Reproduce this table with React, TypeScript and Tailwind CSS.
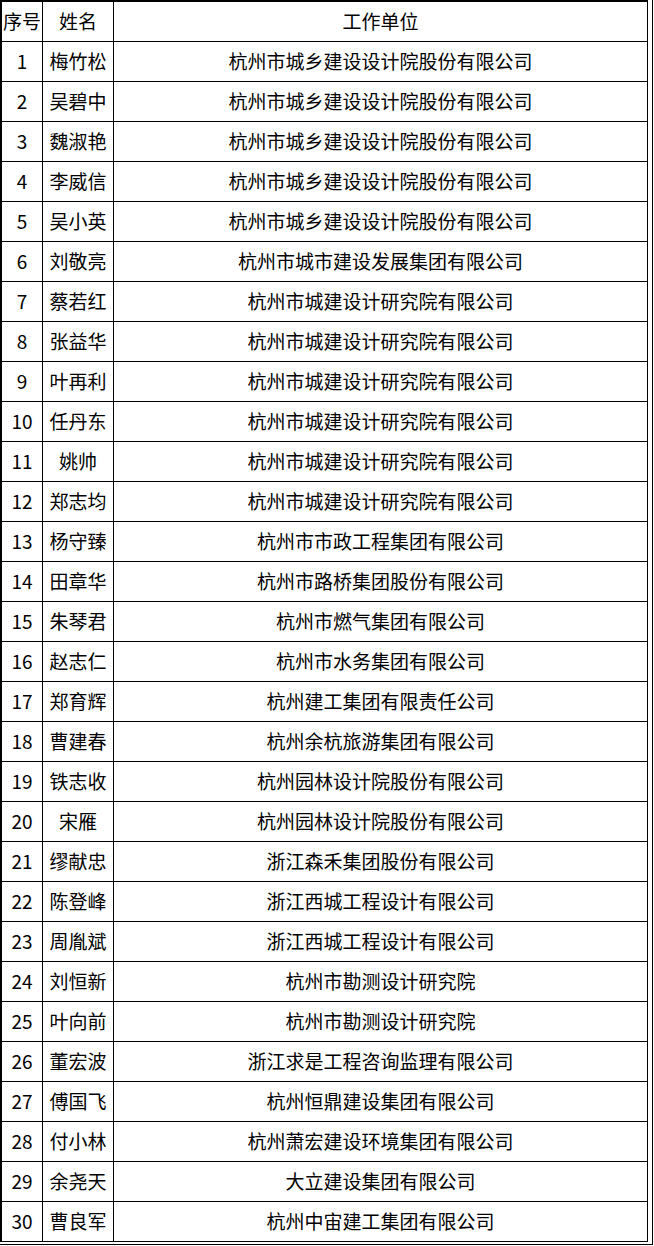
const ROWS: [string, string][] = [
  ['梅竹松', '杭州市城乡建设设计院股份有限公司'],
  ['吴碧中', '杭州市城乡建设设计院股份有限公司'],
  ['魏淑艳', '杭州市城乡建设设计院股份有限公司'],
  ['李威信', '杭州市城乡建设设计院股份有限公司'],
  ['吴小英', '杭州市城乡建设设计院股份有限公司'],
  ['刘敬亮', '杭州市城市建设发展集团有限公司'],
  ['蔡若红', '杭州市城建设计研究院有限公司'],
  ['张益华', '杭州市城建设计研究院有限公司'],
  ['叶再利', '杭州市城建设计研究院有限公司'],
  ['任丹东', '杭州市城建设计研究院有限公司'],
  ['姚帅', '杭州市城建设计研究院有限公司'],
  ['郑志均', '杭州市城建设计研究院有限公司'],
  ['杨守臻', '杭州市市政工程集团有限公司'],
  ['田章华', '杭州市路桥集团股份有限公司'],
  ['朱琴君', '杭州市燃气集团有限公司'],
  ['赵志仁', '杭州市水务集团有限公司'],
  ['郑育辉', '杭州建工集团有限责任公司'],
  ['曹建春', '杭州余杭旅游集团有限公司'],
  ['铁志收', '杭州园林设计院股份有限公司'],
  ['宋雁', '杭州园林设计院股份有限公司'],
  ['缪献忠', '浙江森禾集团股份有限公司'],
  ['陈登峰', '浙江西城工程设计有限公司'],
  ['周胤斌', '浙江西城工程设计有限公司'],
  ['刘恒新', '杭州市勘测设计研究院'],
  ['叶向前', '杭州市勘测设计研究院'],
  ['董宏波', '浙江求是工程咨询监理有限公司'],
  ['傅国飞', '杭州恒鼎建设集团有限公司'],
  ['付小林', '杭州萧宏建设环境集团有限公司'],
  ['余尧天', '大立建设集团有限公司'],
  ['曹良军', '杭州中宙建工集团有限公司'],
];

const cell = 'flex items-center justify-center border-r border-b border-black h-10 pb-[2px] whitespace-nowrap';

export default function App() {
  return (
    <div className="bg-white w-[654px] h-[1246px] text-black text-[19px] leading-none font-['Noto_Sans_CJK_SC','Noto_Sans',sans-serif]">
      {/* outer frame gives the double line on right and bottom */}
      <div className="w-[653px] border-r border-b border-black pr-[4px] pb-[2px]">
        <div className="w-[648px] border-l-2 border-t-2 border-black grid grid-cols-[41px_71px_534px]">
          <div className={cell}>序号</div>
          <div className={cell}>姓名</div>
          <div className={cell}>工作单位</div>
          {ROWS.map(([name, org], i) => (
            <div key={i} className="contents">
              <div className={cell}>{i + 1}</div>
              <div className={cell}>{name}</div>
              <div className={cell}>{org}</div>
            </div>
          ))}
        </div>
      </div>
    </div>
  );
}
